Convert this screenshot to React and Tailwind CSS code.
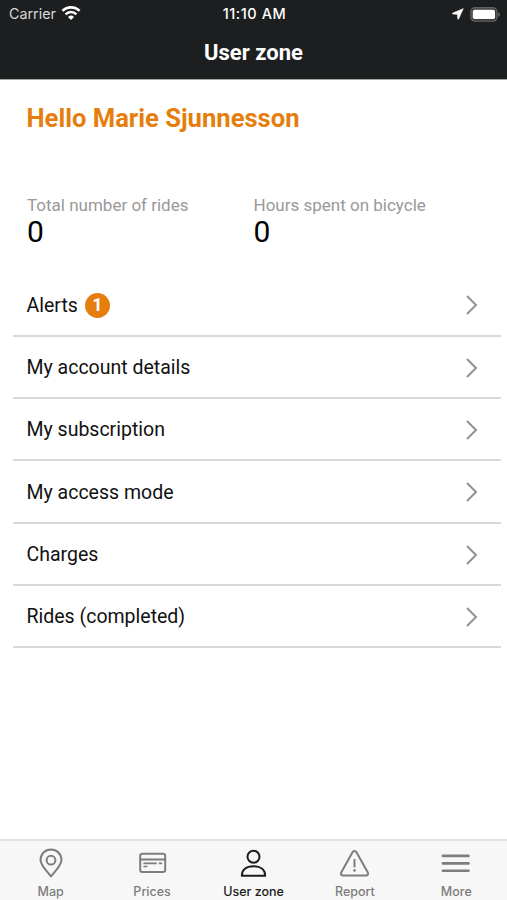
import React from "react";

const menuItems = [
    { label: "Alerts", badge: 1 },
    { label: "My account details" },
    { label: "My subscription" },
    { label: "My access mode" },
    { label: "Charges" },
    { label: "Rides (completed)" },
];

const stats = [
    { label: "Total number of rides", value: 0 },
    { label: "Hours spent on bicycle", value: 0 },
];

function WifiIcon() {
    return (
        <svg className="h-[15px] w-5" viewBox="0 0 20 15" fill="none">
            <path d="M1.4 4.9a12.2 12.2 0 0 1 17.2 0" stroke="white" strokeWidth="2.6" />
            <path d="M4.6 8.3a7.7 7.7 0 0 1 10.8 0" stroke="white" strokeWidth="2.5" />
            <path d="M10 13.9 7 10.9a4.3 4.3 0 0 1 6 0Z" fill="white" />
        </svg>
    );
}

function LocationIcon() {
    return (
        <svg className="h-3 w-3" viewBox="0 0 12 12" fill="white">
            <path d="M11.4.5.7 5c-.7.4-.4 1.1.2 1.1l4.500.3.2 4.300c0 .7.8.8 1.100.2Z" stroke="white" strokeWidth=".4" />
        </svg>
    );
}

function BatteryIcon() {
    return (
        <svg className="h-[15px] w-[30px]" viewBox="0 0 30 15" fill="none">
            <rect x=".9" y=".7" width="26" height="13.400" rx="4" fill="#3a3b3c" stroke="#606162" strokeWidth="1.4" />
            <rect x="2.8" y="2.700" width="22.200" height="9.400" rx="1.800" fill="white" />
            <path d="M28.200 5v4.800c1.200-.5 1.700-1.400 1.700-2.400s-.5-1.900-1.700-2.400Z" fill="#68696a" />
        </svg>
    );
}

function ChevronIcon() {
    return (
        <svg className="h-5 w-3" viewBox="0 0 12 20" fill="none" stroke="#929292" strokeWidth="2">
            <path d="m1 1 9 9-9 9" />
        </svg>
    );
}

function MapIcon() {
    return (
        <svg className="size-8" viewBox="0 0 32 32" fill="none" stroke="currentColor" strokeWidth="2">
            <path d="M16 29.500C12.300 24.600 5.500 18.600 5.500 12.800a10.500 10.300 0 0 1 21 0c0 5.800-6.800 11.800-10.500 16.700Z" strokeLinejoin="round" />
            <circle cx="16" cy="13.200" r="4.400" />
        </svg>
    );
}

function PricesIcon() {
    return (
        <svg className="size-8" viewBox="0 0 32 32" fill="none" stroke="currentColor" strokeWidth="2">
            <rect x="4.200" y="6.800" width="25" height="18.200" rx="2.200" />
            <path d="M4.200 12.500h25" />
            <path d="M7.400 16.400h13.300M22.700 16.400h3.500M7.400 19.500h4" strokeWidth="1.600" />
        </svg>
    );
}

function UserIcon() {
    return (
        <svg className="size-8" viewBox="0 0 32 32" fill="none" stroke="currentColor" strokeWidth="2">
            <circle cx="16.500" cy="9.700" r="6" />
            <path d="M4.800 28.700c0-6 4.500-9.500 11.700-9.500s11.700 3.500 11.700 9.500Z" strokeLinejoin="round" />
        </svg>
    );
}

function ReportIcon() {
    return (
        <svg className="size-8" viewBox="0 0 32 32" fill="none" stroke="currentColor" strokeWidth="2">
            <path d="M13.500 5.200 2.200 25.400c-.9 1.700.1 3.200 1.900 3.200h22.800c1.800 0 2.800-1.500 1.900-3.200L17.500 5.200c-.9-1.600-3.100-1.600-4 0Z" />
            <path d="M15.500 12v8.300" />
            <circle cx="15.500" cy="23.400" r="1.300" fill="currentColor" stroke="none" />
        </svg>
    );
}

function MoreIcon() {
    return (
        <svg className="size-8" viewBox="0 0 32 32" stroke="currentColor" strokeWidth="2.600" strokeLinecap="round">
            <path d="M2.900 8.900h25.600M2.900 16.400h25.600M2.900 23.800h25.600" />
        </svg>
    );
}

const tabs = [
    { label: "Map", icon: MapIcon },
    { label: "Prices", icon: PricesIcon },
    { label: "User zone", icon: UserIcon, active: true },
    { label: "Report", icon: ReportIcon },
    { label: "More", icon: MoreIcon },
];

function App() {
    return (
        <div className="flex h-[900px] w-[507px] flex-col overflow-hidden bg-white font-['Roboto',sans-serif] text-black">
            <header className="h-20 shrink-0 border-b border-[#a4a5a5] bg-[#1c1e1f] text-white">
                <div className="grid h-7 grid-cols-3 items-center pl-[9px] pr-[7px] font-['Inter',sans-serif] text-sm">
                    <div className="flex items-center gap-[5px]">
                        <span className="text-[14.3px] text-[#d8d8d8]">Carrier</span>
                        <WifiIcon />
                    </div>
                    <span className="text-center text-[14.5px] font-medium tracking-[0.55px]">11:10 AM</span>
                    <div className="flex items-center justify-end gap-1.5">
                        <LocationIcon />
                        <BatteryIcon />
                    </div>
                </div>
                <h1 className="pt-[9px] text-center text-[22px] leading-8 font-bold">User zone</h1>
            </header>

            <main className="flex-1">
                <h2 className="px-[26.5px] pt-[22px] text-[25.6px] leading-8 font-bold text-[#e67e0e]">
                    Hello Marie Sjunnesson
                </h2>
                <div className="grid grid-cols-2 pt-[61px]">
                    {stats.map((stat) => (
                        <div key={stat.label} className="pl-[27px] even:pl-0">
                            <p className="text-[17px] leading-5 text-[#999]">{stat.label}</p>
                            <p className="text-[30px] leading-[34px]">{stat.value}</p>
                        </div>
                    ))}
                </div>
                <ul className="mt-[25.4px] ml-[13px] mr-1.5">
                    {menuItems.map((item) => (
                        <li
                            key={item.label}
                            className="flex h-[62.3px] items-center border-b-2 border-[#dadada] pt-[1.6px] pl-[13.5px] pr-[23px]"
                        >
                            <span className="text-[19.500px] text-[#111]">{item.label}</span>
                            {item.badge && (
                                <span className="ml-[7px] flex size-[25px] items-center justify-center rounded-full bg-[#e67e0e] text-lg font-bold text-white">
                                    {item.badge}
                                </span>
                            )}
                            <span className="ml-auto">
                                <ChevronIcon />
                            </span>
                        </li>
                    ))}
                </ul>
            </main>

            <nav className="grid h-[61px] shrink-0 grid-cols-5 border-t-2 border-[#e3e3e3] bg-[#f7f7f7] font-['Inter',sans-serif]">
                {tabs.map((tab) => (
                    <div
                        key={tab.label}
                        className={
                            tab.active
                                ? "flex flex-col items-center pt-1.5 text-[#1c1c1c]"
                                : "flex flex-col items-center pt-1.5 text-[#7d7d7d]"
                        }
                    >
                        <tab.icon />
                        <span className="mt-[5px] text-[12.5px] leading-4 font-medium">{tab.label}</span>
                    </div>
                ))}
            </nav>
        </div>
    );
}

export default App;
